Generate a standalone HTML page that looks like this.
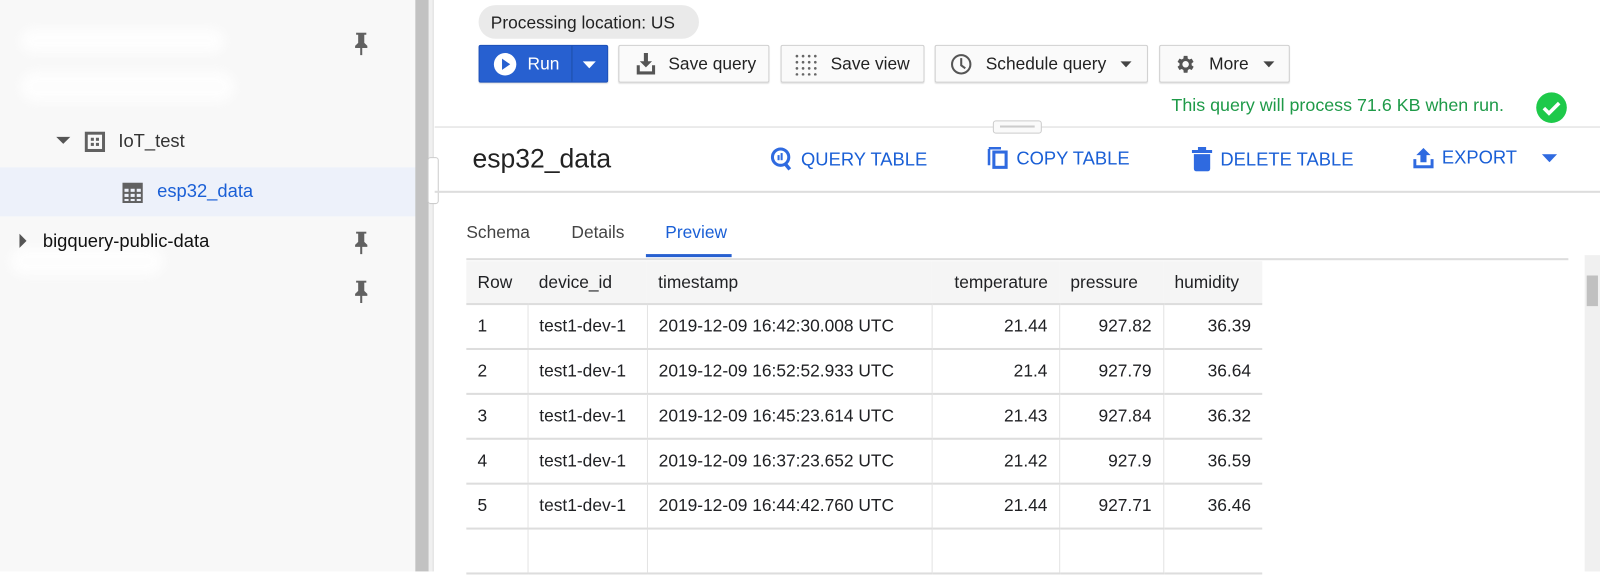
<!DOCTYPE html>
<html><head><meta charset="utf-8"><style>
*{box-sizing:border-box;margin:0;padding:0}
body{width:1600px;height:544px;overflow:hidden;background:#fff;font-family:"Liberation Sans",sans-serif;color:#202124}
#w{position:absolute;left:0;top:0;width:1568px;height:560px;transform:scale(1.0204);transform-origin:0 0}
.a{position:absolute}
.side{left:0;top:0;width:407px;height:560px;background:#f8f8f8}
.blur{background:#fff;border-radius:20px;filter:blur(5px);opacity:.8}
.btn{position:absolute;top:44px;height:37px;border:1px solid #d0d0d0;border-radius:2px;background:#fafafa;font-size:17px;display:flex;align-items:center;color:#222;box-shadow:0 1px 1px rgba(0,0,0,.1)}
.act{position:absolute;top:144px;font-size:18px;color:#1a5fd6;display:flex;align-items:center;gap:8px;font-weight:500}
table{position:absolute;left:457px;top:256px;border-collapse:collapse;font-size:17px}
td{height:44px;border-bottom:2px solid #ddd;border-left:1px solid #e3e3e3;padding:0 11px;white-space:nowrap}
td:first-child{border-left:none}
th{height:42px;background:#f5f5f5;font-weight:normal;text-align:left;padding:0 11px;border-bottom:2px solid #ddd}
.r{text-align:right}
</style></head><body><div id="w">
<div class="a side"></div>
<div class="a blur" style="left:20px;top:28px;width:200px;height:24px"></div>
<div class="a blur" style="left:20px;top:70px;width:210px;height:30px"></div>
<div class="a blur" style="left:10px;top:242px;width:150px;height:28px"></div>
<svg class="a" style="left:346px;top:32px" width="16" height="24" viewBox="0 0 16 24"><path d="M3 0h10v2h-2v8l3 3v2H9v7H7v-7H2v-2l3-3V2H3z" fill="#616161"/></svg>
<svg class="a" style="left:346px;top:227px" width="16" height="24" viewBox="0 0 16 24"><path d="M3 0h10v2h-2v8l3 3v2H9v7H7v-7H2v-2l3-3V2H3z" fill="#616161"/></svg>
<svg class="a" style="left:346px;top:275px" width="16" height="24" viewBox="0 0 16 24"><path d="M3 0h10v2h-2v8l3 3v2H9v7H7v-7H2v-2l3-3V2H3z" fill="#616161"/></svg>
<svg class="a" style="left:55px;top:134px" width="14" height="8"><path d="M0 0h14L7 7z" fill="#555"/></svg>
<svg class="a" style="left:83px;top:129px" width="20" height="20"><rect x="1.5" y="1.5" width="17" height="17" fill="none" stroke="#616161" stroke-width="3"/><rect x="6" y="6" width="3" height="3" fill="#616161"/><rect x="11" y="6" width="3" height="3" fill="#616161"/><rect x="6" y="11" width="3" height="3" fill="#616161"/><rect x="11" y="11" width="3" height="3" fill="#616161"/></svg>
<div class="a" style="left:116px;top:128px;font-size:18px;color:#333">IoT_test</div>
<div class="a" style="left:0;top:164px;width:407px;height:48px;background:#edf1fa"></div>
<svg class="a" style="left:120px;top:179px" width="20" height="20"><rect width="20" height="20" fill="#616161"/><g fill="#edf1fa"><rect x="2" y="6" width="4" height="3"/><rect x="8" y="6" width="4" height="3"/><rect x="14" y="6" width="4" height="3"/><rect x="2" y="11" width="4" height="3"/><rect x="8" y="11" width="4" height="3"/><rect x="14" y="11" width="4" height="3"/><rect x="2" y="16" width="4" height="2"/><rect x="8" y="16" width="4" height="2"/><rect x="14" y="16" width="4" height="2"/></g></svg>
<div class="a" style="left:154px;top:177px;font-size:18px;color:#1a5fd6">esp32_data</div>
<svg class="a" style="left:19px;top:229px" width="8" height="14"><path d="M0 0v14l7-7z" fill="#555"/></svg>
<div class="a" style="left:42px;top:226px;font-size:18px;color:#111">bigquery-public-data</div>
<div class="a" style="left:407px;top:0;width:14px;height:560px;background:#c2c2c2"></div>
<div class="a" style="left:420px;top:0;width:5px;height:560px;background:#f0f0f0;border-right:1px solid #ddd"></div>
<div class="a" style="left:419px;top:154px;width:11px;height:46px;background:#fff;border:1px solid #ccc;border-radius:3px"></div>
<div class="a" style="left:469px;top:5px;width:216px;height:33px;background:#eaeaea;border-radius:17px;font-size:17px;padding:8px 12px;color:#222">Processing location: US</div>
<div class="btn" style="left:469px;width:127px;background:#2760d0;border-color:#1d50b8;color:#fff">
<svg style="margin-left:13px" width="24" height="24"><circle cx="12" cy="12" r="11" fill="#fff"/><path d="M9 6.5v11l8-5.5z" fill="#2760d0"/></svg>
<span style="margin-left:10px">Run</span><div style="position:absolute;left:90px;top:0;width:1px;height:35px;background:#1d4fa8"></div>
<svg style="position:absolute;left:101px;top:15px" width="13" height="7"><path d="M0 0h13L6.5 7z" fill="#fff"/></svg></div>
<div class="btn" style="left:606px;width:148px"><svg style="margin-left:16px;margin-right:12px" width="20" height="22"><path d="M8 0h4v8h4l-6 6-6-6h4z M1 12h3v6h12v-6h3v9H1z" fill="#555"/></svg>Save query</div>
<div class="btn" style="left:765px;width:141px"><svg style="margin-left:13px;margin-right:13px" width="22" height="22"><g fill="#666"><circle cx="2" cy="3" r="1.3"/><circle cx="8" cy="3" r="1.3"/><circle cx="14" cy="3" r="1.3"/><circle cx="20" cy="3" r="1.3"/><circle cx="2" cy="9" r="1.3"/><circle cx="8" cy="9" r="1.3"/><circle cx="14" cy="9" r="1.3"/><circle cx="20" cy="9" r="1.3"/><circle cx="2" cy="15" r="1.3"/><circle cx="8" cy="15" r="1.3"/><circle cx="14" cy="15" r="1.3"/><circle cx="20" cy="15" r="1.3"/><circle cx="2" cy="21" r="1.3"/><circle cx="8" cy="21" r="1.3"/><circle cx="14" cy="21" r="1.3"/><circle cx="20" cy="21" r="1.3"/></g></svg>Save view</div>
<div class="btn" style="left:916px;width:209px"><svg style="margin-left:14px;margin-right:13px" width="22" height="22"><circle cx="11" cy="11" r="9" fill="none" stroke="#555" stroke-width="2"/><path d="M11 5v7l4 3" fill="none" stroke="#555" stroke-width="2"/></svg>Schedule query<svg style="margin-left:14px" width="11" height="6"><path d="M0 0h11L5.5 6z" fill="#444"/></svg></div>
<div class="btn" style="left:1136px;width:128px"><svg style="margin-left:13px;margin-right:13px" width="22" height="22" viewBox="0 0 24 24"><path fill="#555" d="M19.4 13a7.8 7.8 0 000-2l2.1-1.6-2-3.5-2.5 1a7.7 7.7 0 00-1.7-1L15 3h-4l-.4 2.9a7.7 7.7 0 00-1.7 1l-2.5-1-2 3.5L6.5 11a7.8 7.8 0 000 2l-2.1 1.6 2 3.5 2.5-1a7.7 7.7 0 001.7 1L11 21h4l.4-2.9a7.7 7.7 0 001.7-1l2.5 1 2-3.5zM13 15.5a3.5 3.5 0 110-7 3.5 3.5 0 010 7z"/></svg>More<svg style="margin-left:14px" width="11" height="6"><path d="M0 0h11L5.5 6z" fill="#444"/></svg></div>
<div class="a" style="left:1148px;top:93px;font-size:17.5px;color:#1e9a48">This query will process 71.6 KB when run.</div>
<svg class="a" style="left:1505px;top:90px" width="31" height="31"><circle cx="15.5" cy="15.5" r="15" fill="#1ec94a"/><path d="M8 16l5 5 10-10" fill="none" stroke="#fff" stroke-width="3.5"/></svg>
<div class="a" style="left:426px;top:124px;width:1174px;height:1px;background:#d8d8d8"></div>
<div class="a" style="left:973px;top:118px;width:48px;height:13px;background:#fafafa;border:1px solid #ccc;border-radius:3px"><div style="margin:4px 6px;height:2px;background:#ccc"></div></div>
<div class="a" style="left:463px;top:140px;font-size:26px;color:#222">esp32_data</div>
<div class="act" style="left:755px"><svg width="22" height="24"><circle cx="10" cy="10" r="8" fill="none" stroke="#2f6ae0" stroke-width="3"/><path d="M14 16l5 6" stroke="#2f6ae0" stroke-width="3.5"/><rect x="7" y="8" width="2" height="5" fill="#2f6ae0"/><rect x="10" y="6" width="2" height="7" fill="#2f6ae0"/></svg>QUERY TABLE</div>
<div class="act" style="left:968px"><svg width="20" height="22"><path d="M1 2v16" stroke="#2f6ae0" stroke-width="3"/><rect x="6" y="5" width="12" height="15" fill="none" stroke="#2f6ae0" stroke-width="3"/><path d="M1 1h12" stroke="#2f6ae0" stroke-width="3"/></svg>COPY TABLE</div>
<div class="act" style="left:1168px"><svg width="20" height="24"><path d="M0 3h20v3H0zM6 0h8v3H6zM2 7h16v14c0 2-1 3-3 3H5c-2 0-3-1-3-3z" fill="#2f6ae0"/></svg>DELETE TABLE</div>
<div class="act" style="left:1385px"><svg width="20" height="20"><path d="M10 0l7 7h-4v7H7V7H3z M0 11h3v6h14v-6h3v9H0z" fill="#2f6ae0"/></svg>EXPORT<svg style="margin-left:16px" width="15" height="8"><path d="M0 0h15L7.5 8z" fill="#2f6ae0"/></svg></div>
<div class="a" style="left:426px;top:187px;width:1174px;height:2px;background:#ddd"></div>
<div class="a" style="left:457px;top:218px;font-size:17px;color:#444">Schema</div>
<div class="a" style="left:560px;top:218px;font-size:17px;color:#444">Details</div>
<div class="a" style="left:652px;top:218px;font-size:17px;color:#1a5fd6">Preview</div>
<div class="a" style="left:633px;top:249px;width:84px;height:3px;background:#2760d0"></div>
<div class="a" style="left:457px;top:253px;width:1080px;height:2px;background:#ddd"></div>
<div class="a" style="left:1553px;top:250px;width:15px;height:310px;background:#f0f0f0"></div>
<div class="a" style="left:1555px;top:270px;width:11px;height:30px;background:#c0c0c0"></div>
<table>
<tr><th style="width:60px">Row</th><th style="width:117px">device_id</th><th style="width:279px">timestamp</th><th style="width:125px" class="r">temperature</th><th style="width:102px">pressure</th><th style="width:97px">humidity</th></tr>
<tr><td>1</td><td>test1-dev-1</td><td>2019-12-09 16:42:30.008 UTC</td><td class="r">21.44</td><td class="r">927.82</td><td class="r">36.39</td></tr>
<tr><td>2</td><td>test1-dev-1</td><td>2019-12-09 16:52:52.933 UTC</td><td class="r">21.4</td><td class="r">927.79</td><td class="r">36.64</td></tr>
<tr><td>3</td><td>test1-dev-1</td><td>2019-12-09 16:45:23.614 UTC</td><td class="r">21.43</td><td class="r">927.84</td><td class="r">36.32</td></tr>
<tr><td>4</td><td>test1-dev-1</td><td>2019-12-09 16:37:23.652 UTC</td><td class="r">21.42</td><td class="r">927.9</td><td class="r">36.59</td></tr>
<tr><td>5</td><td>test1-dev-1</td><td>2019-12-09 16:44:42.760 UTC</td><td class="r">21.44</td><td class="r">927.71</td><td class="r">36.46</td></tr>
<tr><td></td><td></td><td></td><td></td><td></td><td></td></tr>
</table>
</div></body></html>
